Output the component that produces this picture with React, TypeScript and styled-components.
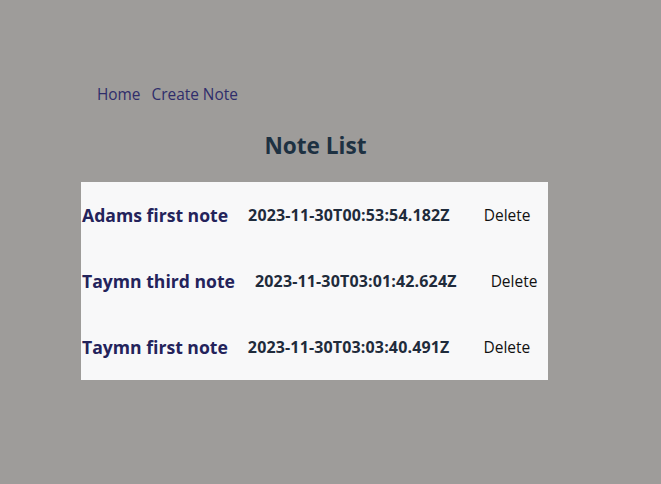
import React from "react";
import styled, { createGlobalStyle } from "styled-components";

const Global = createGlobalStyle`
  html, body { margin: 0; padding: 0; background: #9e9c9a; }
  body { font-family: "Open Sans", "Noto Sans", sans-serif; }
`;

const Page = styled.div`
  width: 661px;
  height: 484px;
  box-sizing: border-box;
  padding: 83px 0 0 81px;
`;

const Container = styled.div`
  width: 467px;
  display: flex;
  flex-direction: column;
`;

const Nav = styled.nav`
  display: flex;
  gap: 11px;
  padding-left: 16px;
  height: 22px;
  align-items: center;
`;

const NavLink = styled.a`
  font-size: 15.4px;
  color: #2f2d6b;
  text-decoration: none;
`;

const Title = styled.h2`
  margin: 26px 0 0;
  text-align: center;
  font-size: 22.6px;
  font-weight: 700;
  color: #1d3142;
  line-height: 30px;
  padding-left: 2px;
`;

const List = styled.div`
  margin-top: 21px;
  background: #f8f8f9;
  display: flex;
  flex-direction: column;
`;

const Row = styled.div`
  display: flex;
  align-items: center;
  height: 66px;
  padding-left: 1px;
`;

const NoteTitle = styled.span`
  font-size: 17.6px;
  font-weight: 700;
  color: #24235b;
  white-space: nowrap;
`;

const DateText = styled.span`
  margin-left: 20px;
  font-size: 16px;
  letter-spacing: 0.15px;
  font-weight: 700;
  color: #1f2b3b;
  white-space: nowrap;
`;

const DeleteButton = styled.button`
  margin-left: 34px;
  padding: 0;
  border: none;
  background: transparent;
  font-family: inherit;
  font-size: 15.5px;
  color: #111;
  cursor: pointer;
`;

const notes = [
  { title: "Adams first note", date: "2023-11-30T00:53:54.182Z" },
  { title: "Taymn third note", date: "2023-11-30T03:01:42.624Z" },
  { title: "Taymn first note", date: "2023-11-30T03:03:40.491Z" },
];

export default function App() {
  return (
    <>
      <Global />
      <Page>
        <Container>
          <Nav>
            <NavLink href="#">Home</NavLink>
            <NavLink href="#">Create Note</NavLink>
          </Nav>
          <Title>Note List</Title>
          <List>
            {notes.map((n) => (
              <Row key={n.date}>
                <NoteTitle>{n.title}</NoteTitle>
                <DateText>{n.date}</DateText>
                <DeleteButton>Delete</DeleteButton>
              </Row>
            ))}
          </List>
        </Container>
      </Page>
    </>
  );
}
